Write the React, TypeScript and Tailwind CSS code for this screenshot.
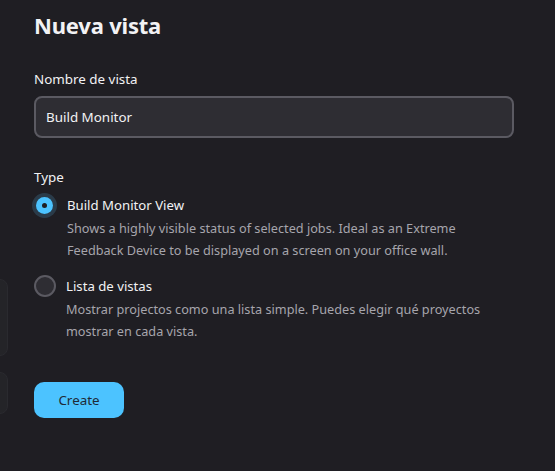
export default function App() {
  const font = { fontFamily: '"Noto Sans", "Open Sans", sans-serif' };

  return (
    <div className="relative h-[471px] w-[555px] overflow-hidden bg-[#1f1e23] text-[#f2f2f4]" style={font}>
      {/* clipped cards from the page behind */}
      <div className="absolute left-[-60px] top-[279px] h-[77px] w-[68px] rounded-lg border border-[#2a2a2f] bg-[#242428]" />
      <div className="absolute left-[-60px] top-[372px] h-[42px] w-[68px] rounded-lg border border-[#2a2a2f] bg-[#242428]" />

      <div className="px-[34px] pt-[8px]">
        <h1 className="text-[22px] font-bold leading-[34px] tracking-[-0.2px]">Nueva vista</h1>

        <label className="mt-[27px] block text-[13.4px] leading-[20px]">Nombre de vista</label>
        <div className="mt-[7px] flex h-[42px] w-[480px] items-center rounded-lg border-2 border-[#5b5a62] bg-[#2e2d33] px-[10px] text-[13.4px]">
          Build Monitor
        </div>

        <div className="mt-[29px] text-[13.4px] leading-[20px]">Type</div>

        <div className="mt-[6px] flex gap-[10px]">
          <div className="-ml-[2px] flex h-[25px] w-[25px] shrink-0 items-center justify-center rounded-full bg-[#2a3b49]">
            <div className="flex h-[17px] w-[17px] items-center justify-center rounded-full bg-[#4cc3ff]">
              <div className="h-[5px] w-[5px] rounded-full bg-[#1f1e23]" />
            </div>
          </div>
          <div className="pt-[2px]">
            <div className="text-[13.2px] leading-[20px]">Build Monitor View</div>
            <p className="mt-[2px] text-[12.7px] leading-[22px] text-[#a6a5ac]">
              Shows a highly visible status of selected jobs. Ideal as an Extreme
              <br />
              Feedback Device to be displayed on a screen on your office wall.
            </p>
          </div>
        </div>

        <div className="mt-[13px] flex gap-[10px]">
          <div className="mt-[1px] h-[22px] w-[22px] shrink-0 rounded-full border-2 border-[#5b5a62] bg-[#2e2d33]" />
          <div className="pt-[2px]">
            <div className="text-[13.2px] leading-[20px]">Lista de vistas</div>
            <p className="mt-[2px] text-[12.7px] leading-[22px] text-[#a6a5ac]">
              Mostrar projectos como una lista simple. Puedes elegir qué proyectos
              <br />
              mostrar en cada vista.
            </p>
          </div>
        </div>

        <button className="mt-[40px] h-[36px] w-[90px] rounded-[10px] bg-[#4cc3ff] text-[13.4px] text-[#1f2a36]">
          Create
        </button>
      </div>
    </div>
  );
}
